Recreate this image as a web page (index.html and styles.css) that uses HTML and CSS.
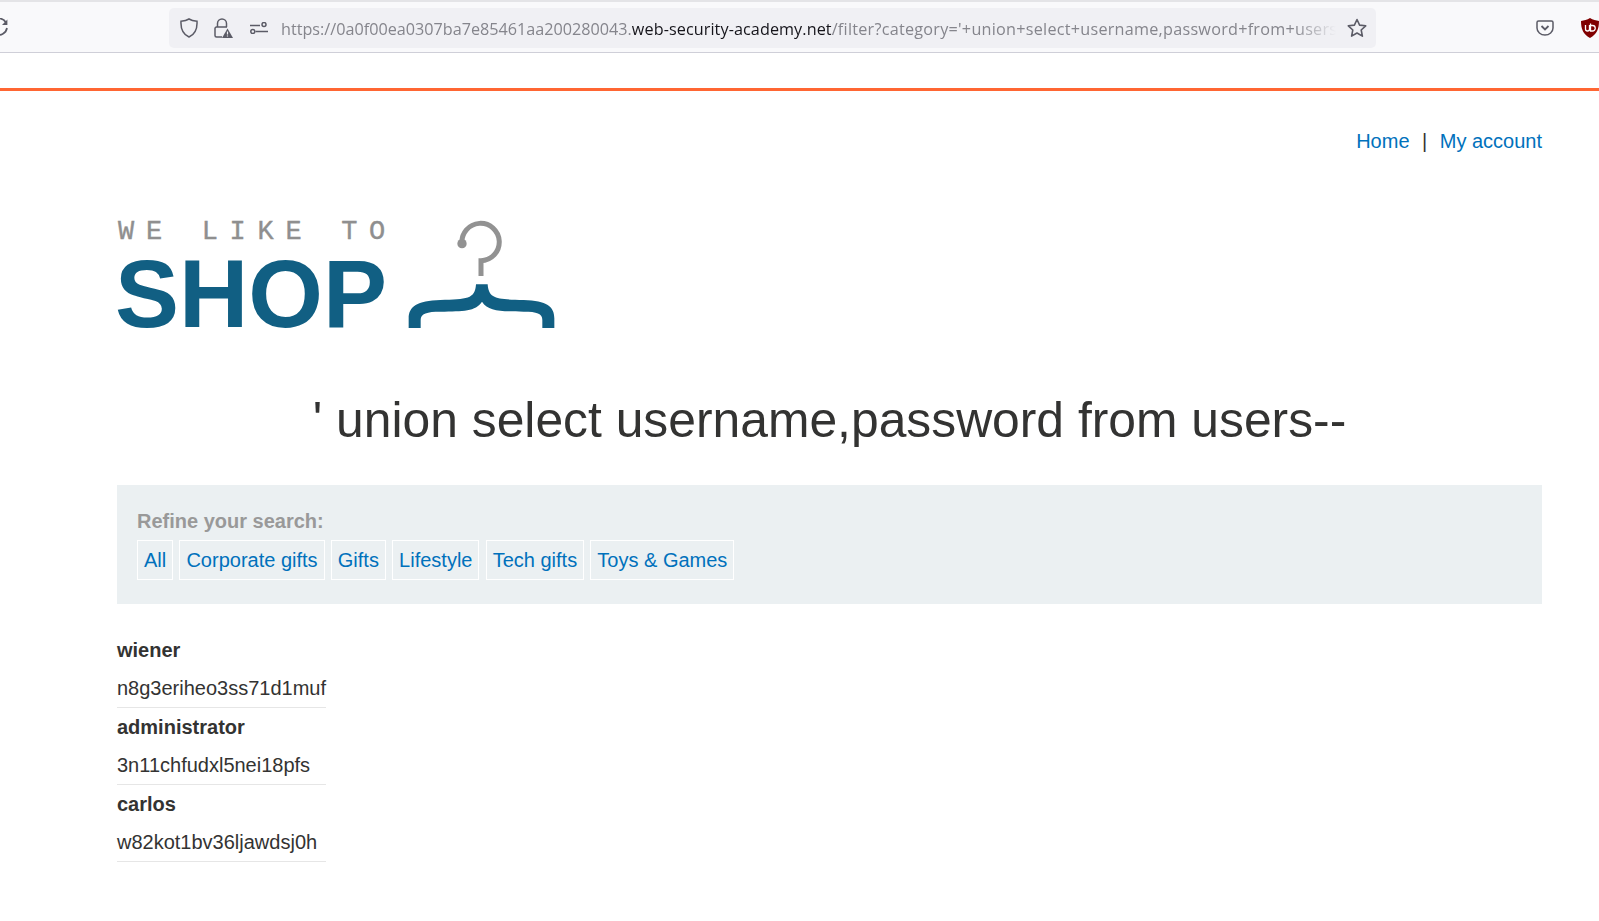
FILE: index.html
```html
<!DOCTYPE html>
<html lang="en">
<head>
  <meta charset="UTF-8" />
  <title>Filter</title>
  <link rel="stylesheet" href="styles.css">
</head>
<body>

  <!-- browser toolbar -->
  <div class="toolbar">
    <svg class="icon-reload" viewBox="0 0 20 20" width="20" height="20" fill="none" stroke="#5b5b66" stroke-width="1.7">
      <path d="M17 4.5A8.2 8.2 0 1 0 18 10"/>
      <path d="M18.4 1.6V7h-5.4z" fill="#5b5b66" stroke="none"/>
    </svg>
    <div class="urlbar">
      <svg class="icon-shield" viewBox="0 0 18 20" width="18" height="20" fill="none" stroke="#5b5b66" stroke-width="1.5">
        <path d="M9 1 C11.5 2.6 14 3 17 3.2 C17.4 10 15.5 16 9 19 C2.5 16 .6 10 1 3.2 C4 3 6.5 2.6 9 1Z"/>
      </svg>
      <svg class="icon-lock" viewBox="0 0 19 20" width="19" height="20" fill="none" stroke="#5b5b66" stroke-width="1.5">
        <path d="M3.5 9V5.5a4.5 4.5 0 0 1 9 0V9"/>
        <path d="M8 19H2.5A1.5 1.5 0 0 1 1 17.5V10.500A1.500 1.500 0 0 1 2.500 9H13"/>
        <path d="M13.500 10.500L19 20H8z" fill="#5b5b66" stroke="none"/>
        <path d="M13.500 13.500v3M13.500 17.500v1" stroke="#f0f0f4" stroke-width="1.200"/>
      </svg>
      <svg class="icon-perm" viewBox="0 0 18 12" width="18" height="12" fill="none" stroke="#5b5b66" stroke-width="1.5">
        <path d="M0 3.500H10M5.500 9.500H18"/>
        <circle cx="14" cy="2.500" r="2"/>
        <circle cx="2.800" cy="9.500" r="2"/>
      </svg>
      <div class="url"><span class="dim">https://0a0f00ea0307ba7e85461aa200280043.</span><span class="domain">web-security-academy.net</span><span class="dim path">/filter?category='+union+select+username,password+from+users--</span></div>
      <svg class="icon-star" viewBox="0 0 20 20" width="20" height="20" fill="none" stroke="#5b5b66" stroke-width="1.600" stroke-linejoin="round">
        <path d="M10 1.500l2.600 5.600 6.100.7-4.500 4.200 1.200 6.100L10 15l-5.400 3.100 1.200-6.100L1.300 7.800l6.100-.7z"/>
      </svg>
    </div>
    <svg class="icon-pocket" viewBox="0 0 18 16" width="18" height="16" fill="none" stroke="#5b5b66" stroke-width="1.500">
      <path d="M2.500 1h13A1.500 1.500 0 0 1 17 2.500V8A8 7 0 0 1 1 8V2.500A1.500 1.500 0 0 1 2.500 1z"/>
      <path d="M5.500 6L9 9.500 12.500 6" stroke-width="1.800"/>
    </svg>
    <svg class="icon-ublock" viewBox="0 0 18 20" width="18" height="20">
      <path d="M9 0C12 2 15 2.500 18 3C18 11 16 16 9 20C2 16 0 11 0 3C3 2.500 6 2 9 0Z" fill="#800000"/>
      <path d="M4.500 7v4a2 2 0 0 0 4 0V7M9.500 5.500V13h2a2.500 2.500 0 0 0 0-5.500h-2" fill="none" stroke="#fff" stroke-width="1.300"/>
    </svg>
  </div>

  <div class="orange-bar"></div>

  <div class="page">
    <nav class="top-links">
      <a href="#">Home</a><span class="sep">|</span><a href="#">My account</a>
    </nav>

    <!-- logo -->
    <div class="logo">
      <div class="logo-text">
        <div class="logo-small">WE LIKE TO</div>
        <div class="logo-big">SHOP</div>
      </div>
      <svg class="hanger" viewBox="925 60 437 324" width="147" height="108">
        <path d="M1085 131 A56 56 0 1 1 1142 182 V228" fill="none" stroke="#929292" stroke-width="15"/>
        <circle cx="1085" cy="131" r="14" fill="#929292"/>
        <path d="M1127 253H1162C1165 298 1190 298 1270 300C1340 302 1362 320 1362 355V384H1326V360C1326 340 1310 335 1270 335C1200 333 1165 335 1145 305C1125 335 1090 333 1020 335C980 335 961 340 961 360V384H925V355C925 320 950 302 1020 300C1100 298 1124 298 1127 253Z" fill="#115f83"/>
      </svg>
    </div>

    <h1>' union select username,password from users--</h1>

    <section class="filters">
      <div class="filters-label">Refine your search:</div>
      <div class="filters-links">
        <a href="#">All</a>
        <a href="#">Corporate gifts</a>
        <a href="#">Gifts</a>
        <a href="#">Lifestyle</a>
        <a href="#">Tech gifts</a>
        <a href="#">Toys &amp; Games</a>
      </div>
    </section>

    <table class="results">
      <tbody>
        <tr><th>wiener</th></tr>
        <tr><td>n8g3eriheo3ss71d1muf</td></tr>
        <tr><th>administrator</th></tr>
        <tr><td>3n11chfudxl5nei18pfs</td></tr>
        <tr><th>carlos</th></tr>
        <tr><td>w82kot1bv36ljawdsj0h</td></tr>
      </tbody>
    </table>
  </div>

</body>
</html>
```

FILE: styles.css
```css
* {
  box-sizing: border-box;
}
body {
  margin: 0;
  font-family: "Liberation Sans", Arial, sans-serif;
  font-size: 20px;
  color: #333332;
  background-color: #fff;
  overflow: hidden;
}
a {
  color: #0071bc;
  text-decoration: none;
}

/* browser toolbar */
.toolbar {
  display: flex;
  align-items: center;
  height: 53px;
  padding-top: 2px;
  background-color: #f9f9fb;
  border-top: 2px solid #e4e4e7;
  border-bottom: 1px solid #cfcfd8;
}
.icon-reload {
  flex: none;
  margin-left: -11px;
}
.urlbar {
  display: flex;
  align-items: center;
  flex: none;
  width: 1207px;
  height: 40px;
  margin-left: 160px;
  padding: 0 9px 0 11px;
  border-radius: 5px;
  background-color: #f0f0f4;
}
.icon-lock {
  flex: none;
  margin-left: 16px;
}
.icon-shield,
.icon-star,
.icon-pocket,
.icon-ublock {
  flex: none;
}
.icon-perm {
  flex: none;
  margin-left: 17px;
}
.url {
  flex: 1;
  min-width: 0;
  margin: 0 11px 0 13px;
  padding-top: 1px;
  overflow: hidden;
  white-space: nowrap;
  font-family: "Open Sans", "Noto Sans", sans-serif;
  font-size: 16.2px;
  color: #15141a;
  -webkit-mask-image: linear-gradient(to right, #000 96%, transparent 100%);
  mask-image: linear-gradient(to right, #000 96%, transparent 100%);
}
.dim {
  color: #85858c;
}
.domain {
  letter-spacing: 0.08px;
}
.path {
  letter-spacing: 0.25px;
}
.icon-pocket {
  margin-left: 160px;
}
.icon-ublock {
  margin-left: 27px;
}

.orange-bar {
  height: 3px;
  margin-top: 35px;
  background-color: #ff6633;
}

/* page */
.page {
  padding: 0 57px 0 117px;
}
.top-links {
  display: flex;
  justify-content: flex-end;
  padding-top: 38px;
  line-height: 24px;
}
.sep {
  margin: 0 12.500px;
}
.logo {
  display: flex;
  align-items: flex-end;
  margin-top: 64px;
}
.logo-text {
  width: 291px;
}
.logo-small {
  margin-bottom: 12px;
  margin-left: 1px;
  font-family: "Liberation Mono", monospace;
  font-size: 27px;
  line-height: 30px;
  letter-spacing: 11.700px;
  white-space: nowrap;
  color: #8f8f8f;
  -webkit-text-stroke: 0.4px #8f8f8f;
}
.logo-big {
  margin-left: -2px;
  font-size: 96px;
  line-height: 70px;
  font-weight: bold;
  color: #115f83;
}
.hanger {
  flex: none;
  margin-bottom: 1px;
}
h1 {
  margin: 61px 0 0;
  font-size: 49.800px;
  line-height: 60px;
  font-weight: normal;
  text-align: center;
}
.filters {
  height: 119px;
  margin-top: 35px;
  padding: 24px 20px 0;
  background-color: #ebf0f2;
}
.filters-label {
  font-weight: bold;
  line-height: 24px;
  color: #999;
}
.filters-links {
  display: flex;
  gap: 6.200px;
  margin-top: 7px;
}
.filters-links a {
  padding: 0 6px;
  line-height: 38px;
  border: 1px solid #fff;
}
.results {
  margin-top: 26px;
  border-collapse: collapse;
}
.results th,
.results td {
  padding: 2px 0 0;
  text-align: left;
  white-space: nowrap;
}
.results th {
  height: 38px;
}
.results td {
  height: 39px;
  border-bottom: 1px solid #e6e6e6;
}
```
